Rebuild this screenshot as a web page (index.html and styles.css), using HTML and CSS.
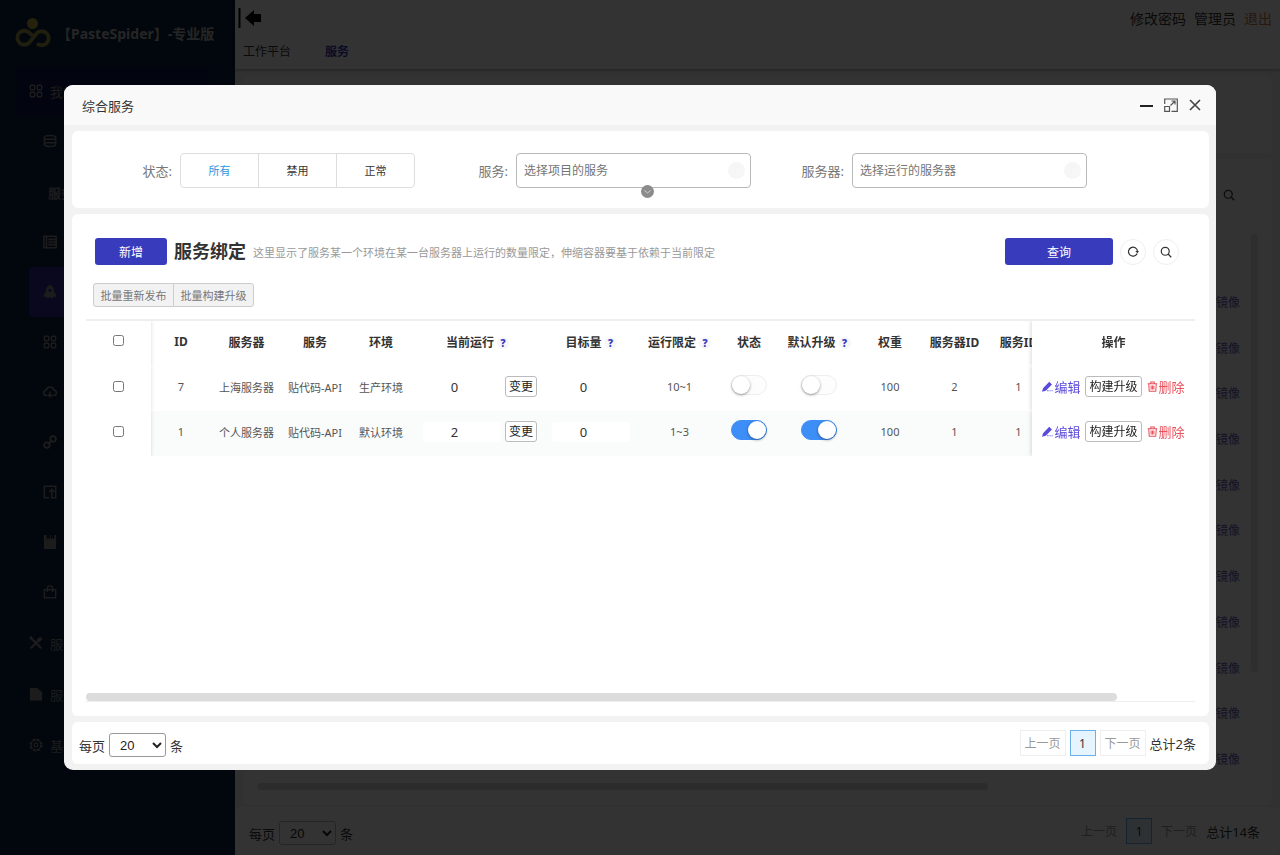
FILE: index.html
```html
<!DOCTYPE html>
<html lang="zh-CN">
<head>
    <meta charset="UTF-8">
    <meta name="viewport" content="width=device-width, initial-scale=1.0">
    <title>PasteSpider - 综合服务</title>
    <link rel="stylesheet" href="styles.css">
</head>
<body>
    <svg class="sprite" aria-hidden="true">
        <symbol id="i-grid" viewBox="0 0 16 16"><g fill="none" stroke="currentColor" stroke-width="1.6"><rect x="1.5" y="1.5" width="5" height="5" rx="1"/><rect x="9.5" y="1.5" width="5" height="5" rx="1"/><rect x="1.5" y="9.5" width="5" height="5" rx="1"/><rect x="9.5" y="9.5" width="5" height="5" rx="1"/></g></symbol>
        <symbol id="i-database" viewBox="0 0 16 16"><path d="M1.500 4c0-3 13-3 13 0v8c0 3-13 3-13 0zM2 6h12M2 10h12" fill="none" stroke="currentColor" stroke-width="1.800"/></symbol>
        <symbol id="i-list" viewBox="0 0 16 16"><path d="M1 1.500h14v13H1zM4 1.500v13M6 5h8M6 8h8M6 11h8" fill="none" stroke="currentColor" stroke-width="1.800"/></symbol>
        <symbol id="i-rocket" viewBox="0 0 16 16"><path d="M8 0c3 1 5 4 4.500 7.500L15 11v3l-3-1-1 2.500L8 14l-3 1.500L4 13l-3 1v-3l2.500-3.500C3 4 5 1 8 0z" fill="currentColor"/><circle cx="8" cy="6" r="1.800" fill="#302a9a"/></symbol>
        <symbol id="i-cloud" viewBox="0 0 16 16"><path d="M5 12H4a3 3 0 0 1-.5-6 4.600 4.600 0 0 1 9 0A3 3 0 0 1 12 12h-1M8 7.500V13M5.800 11L8 13.200 10.200 11" fill="none" stroke="currentColor" stroke-width="1.800"/></symbol>
        <symbol id="i-link" viewBox="0 0 16 16"><g fill="none" stroke="currentColor" stroke-width="2"><circle cx="4.500" cy="11.500" r="3.200"/><circle cx="11.500" cy="4.500" r="3.200"/><path d="M6 10l4-4"/></g></symbol>
        <symbol id="i-export" viewBox="0 0 16 16"><path d="M7 14.500H1.500v-13h13v13H10V5M7 8l3-3 3 3" fill="none" stroke="currentColor" stroke-width="1.800"/></symbol>
        <symbol id="i-book" viewBox="0 0 16 16"><path d="M1 0h3v5l2-1.500L8 5V0h1v5l2-1.500L13 5V0h2v16H1z" fill="currentColor"/></symbol>
        <symbol id="i-bag" viewBox="0 0 16 16"><path d="M1.500 5.500h13v9h-13zM5 8V4a3 3 0 0 1 6 0v4" fill="none" stroke="currentColor" stroke-width="1.6"/></symbol>
        <symbol id="i-tools" viewBox="0 0 16 16"><path d="M2 2l12 12M14 2L2 14" stroke="currentColor" stroke-width="2.600"/><path d="M9 4l4-3.500L12.500 3l3 .5L12 7zM0 1l3-1 2 4-2 1z" fill="currentColor"/></symbol>
        <symbol id="i-file" viewBox="0 0 16 16"><path d="M1 1h8.500L15 6v9.500H1z" fill="currentColor"/></symbol>
        <symbol id="i-gear" viewBox="0 0 16 16"><g fill="none" stroke="currentColor"><circle cx="8" cy="8" r="6.500" stroke-width="1.800" stroke-dasharray="3.400 1.700"/><circle cx="8" cy="8" r="5.500"/><circle cx="8" cy="8" r="2.200" stroke-width="1.300"/></g></symbol>
        <symbol id="i-search" viewBox="0 0 16 16"><circle cx="7" cy="7" r="5.300" fill="none" stroke="currentColor" stroke-width="1.600"/><path d="M10.800 10.800L15 15" stroke="currentColor" stroke-width="1.800"/></symbol>
        <symbol id="i-edit" viewBox="0 0 16 16"><path d="M0 15.500l1.500-5L10.500 1l4 4L5.500 14zM7.500 13.500h2v1.500h-2zM11 13.500h1.500v1.500H11zM14 13.500h1.500v1.500H14z" fill="currentColor"/></symbol>
        <symbol id="i-trash" viewBox="0 0 16 16"><path d="M1 4h14M5.500 4V1.500h5V4M2.500 4l.8 10.800h9.400L13.500 4M6 6.500v6M8 6.500v6M10 6.500v6" fill="none" stroke="currentColor" stroke-width="1.500"/></symbol>
    </svg>

    <div class="app">
        <aside class="sidebar">
            <div class="brand">
                <svg class="logo" viewBox="0 0 36 32">
                    <circle cx="17.500" cy="6.500" r="5.500" fill="#b8a83c"/>
                    <path d="M17.500 18.500L14 15.500A7 7 0 1 0 14 26L22 16A7 7 0 1 1 22 26.500" fill="none" stroke="#a09440" stroke-width="3.800"/>
                </svg>
                <span>【PasteSpider】-专业版</span>
            </div>
            <nav class="nav">
                <a href="#" class="nav-item current"><svg><use href="#i-grid"/></svg>我的</a>
                <a href="#" class="nav-item sub"><svg><use href="#i-database"/></svg></a>
                <span class="nav-item nav-title">服务</span>
                <a href="#" class="nav-item sub"><svg><use href="#i-list"/></svg></a>
                <a href="#" class="nav-item sub active"><svg><use href="#i-rocket"/></svg></a>
                <a href="#" class="nav-item sub"><svg><use href="#i-grid"/></svg></a>
                <a href="#" class="nav-item sub"><svg><use href="#i-cloud"/></svg></a>
                <a href="#" class="nav-item sub"><svg><use href="#i-link"/></svg></a>
                <a href="#" class="nav-item sub"><svg><use href="#i-export"/></svg></a>
                <a href="#" class="nav-item sub"><svg><use href="#i-book"/></svg></a>
                <a href="#" class="nav-item sub"><svg><use href="#i-bag"/></svg></a>
                <a href="#" class="nav-item group"><svg><use href="#i-tools"/></svg>服务</a>
                <a href="#" class="nav-item group"><svg><use href="#i-file"/></svg>服务</a>
                <a href="#" class="nav-item group"><svg><use href="#i-gear"/></svg>基础</a>
            </nav>
        </aside>
        <main class="main">
            <header class="topbar">
                <div class="topbar-row">
                    <button class="fold" aria-label="收起菜单">
                        <svg viewBox="0 0 24 20"><path d="M1.500 0v20" stroke="#000" stroke-width="2"/><path d="M7 10l9-8v4h7v8h-7v4z"/></svg>
                    </button>
                    <div class="user-links">
                        <a href="#">修改密码</a>
                        <a href="#">管理员</a>
                        <a href="#" class="logout">退出</a>
                    </div>
                </div>
                <div class="tabs">
                    <a href="#">工作平台</a>
                    <a href="#" class="on">服务</a>
                </div>
            </header>
            <section class="panel page-filter"></section>
            <section class="panel page-body">
                <svg class="page-search"><use href="#i-search"/></svg>
                <div class="page-links">
                    <a href="#">镜像</a>
                    <a href="#">镜像</a>
                    <a href="#">镜像</a>
                    <a href="#">镜像</a>
                    <a href="#">镜像</a>
                    <a href="#">镜像</a>
                    <a href="#">镜像</a>
                    <a href="#">镜像</a>
                    <a href="#">镜像</a>
                    <a href="#">镜像</a>
                    <a href="#">镜像</a>
                </div>
                <div class="page-scroll-y"></div>
                <div class="page-scroll"></div>
            </section>
            <footer class="panel pager page-pager">
                <label class="page-size">每页 <select><option>20</option></select> 条</label>
                <div class="pages">
                    <button disabled>上一页</button>
                    <button class="on">1</button>
                    <button disabled>下一页</button>
                    <span>总计14条</span>
                </div>
            </footer>
        </main>
    </div>

    <div class="mask"></div>

    <div class="dialog" role="dialog" aria-labelledby="dialog-title">
        <header class="dialog-head">
            <span id="dialog-title">综合服务</span>
            <div class="dialog-tools">
                <button aria-label="最小化"><svg viewBox="0 0 14 14"><path d="M0 8h13" stroke="#222" stroke-width="2"/></svg></button>
                <button aria-label="最大化"><svg viewBox="0 0 14 14"><path d="M.7 6V1h12.600v12.300H7.500M.7 8.500h4.800v4.800H.7zM6.500 7.500L11 3M7.500 3H11v3.500" fill="none" stroke="#555" stroke-width="1.200"/></svg></button>
                <button aria-label="关闭"><svg viewBox="0 0 14 14"><path d="M2 2l10 10M12 2L2 12" stroke="#444" stroke-width="1.600"/></svg></button>
            </div>
        </header>

        <div class="dialog-body">
            <form class="card filter">
                <div class="field">
                    <span class="label" id="state-label">状态:</span>
                    <div class="segment" role="radiogroup" aria-labelledby="state-label">
                        <label><input type="radio" name="state" checked><span>所有</span></label>
                        <label><input type="radio" name="state"><span>禁用</span></label>
                        <label><input type="radio" name="state"><span>正常</span></label>
                    </div>
                </div>
                <div class="field">
                    <label class="label" for="service">服务:</label>
                    <div class="picker">
                        <input type="text" id="service" placeholder="选择项目的服务">
                        <i></i>
                    </div>
                </div>
                <div class="field">
                    <label class="label" for="server">服务器:</label>
                    <div class="picker">
                        <input type="text" id="server" placeholder="选择运行的服务器">
                        <i></i>
                    </div>
                </div>
                <button type="button" class="more" aria-label="展开">
                    <svg viewBox="0 0 13 13"><path d="M3.500 5.500l3 2.500 3-2.500" fill="none" stroke="#d0d0d0"/></svg>
                </button>
            </form>

            <section class="card content">
                <div class="toolbar">
                    <button class="primary">新增</button>
                    <h2>服务绑定</h2>
                    <p>这里显示了服务某一个环境在某一台服务器上运行的数量限定，伸缩容器要基于依赖于当前限定</p>
                    <button class="primary query">查询</button>
                    <button class="round" aria-label="刷新"><svg viewBox="0 0 16 16"><path d="M13.500 10A6 6 0 1 1 14 7" fill="none" stroke="currentColor" stroke-width="1.600"/><path d="M11 6.500h5L14 9.500z" fill="currentColor"/></svg></button>
                    <button class="round" aria-label="搜索"><svg><use href="#i-search"/></svg></button>
                </div>
                <div class="batch">
                    <button>批量重新发布</button>
                    <button>批量构建升级</button>
                </div>

                <div class="table-wrap">
                    <table>
                        <colgroup>
                            <col class="w-check"><col class="w-id"><col class="w-server"><col class="w-name"><col class="w-name">
                            <col class="w-running"><col class="w-target"><col class="w-limit"><col class="w-state"><col class="w-default">
                            <col class="w-weight"><col class="w-server-id"><col class="w-service-id"><col class="w-action">
                        </colgroup>
                        <thead>
                            <tr>
                                <th class="stick-left"><input type="checkbox" aria-label="全选"></th>
                                <th>ID</th>
                                <th>服务器</th>
                                <th>服务</th>
                                <th>环境</th>
                                <th>当前运行<b class="tip">?</b></th>
                                <th>目标量<b class="tip">?</b></th>
                                <th>运行限定<b class="tip">?</b></th>
                                <th>状态</th>
                                <th>默认升级<b class="tip">?</b></th>
                                <th>权重</th>
                                <th>服务器ID</th>
                                <th>服务ID</th>
                                <th class="stick-right">操作</th>
                            </tr>
                        </thead>
                        <tbody>
                            <tr>
                                <td class="stick-left"><input type="checkbox" aria-label="选择 7"></td>
                                <td>7</td>
                                <td>上海服务器</td>
                                <td>贴代码-API</td>
                                <td>生产环境</td>
                                <td><div class="change"><input type="number" value="0" aria-label="当前运行"><button class="small">变更</button></div></td>
                                <td><input type="number" value="0" aria-label="目标量"></td>
                                <td>10~1</td>
                                <td><input type="checkbox" class="switch" aria-label="状态"></td>
                                <td><input type="checkbox" class="switch" aria-label="默认升级"></td>
                                <td>100</td>
                                <td>2</td>
                                <td>1</td>
                                <td class="stick-right">
                                    <div class="actions">
                                        <a href="#" class="edit"><svg><use href="#i-edit"/></svg>编辑</a>
                                        <button class="small">构建升级</button>
                                        <a href="#" class="delete"><svg><use href="#i-trash"/></svg>删除</a>
                                    </div>
                                </td>
                            </tr>
                            <tr>
                                <td class="stick-left"><input type="checkbox" aria-label="选择 1"></td>
                                <td>1</td>
                                <td>个人服务器</td>
                                <td>贴代码-API</td>
                                <td>默认环境</td>
                                <td><div class="change"><input type="number" value="2" aria-label="当前运行"><button class="small">变更</button></div></td>
                                <td><input type="number" value="0" aria-label="目标量"></td>
                                <td>1~3</td>
                                <td><input type="checkbox" class="switch" aria-label="状态" checked></td>
                                <td><input type="checkbox" class="switch" aria-label="默认升级" checked></td>
                                <td>100</td>
                                <td>1</td>
                                <td>1</td>
                                <td class="stick-right">
                                    <div class="actions">
                                        <a href="#" class="edit"><svg><use href="#i-edit"/></svg>编辑</a>
                                        <button class="small">构建升级</button>
                                        <a href="#" class="delete"><svg><use href="#i-trash"/></svg>删除</a>
                                    </div>
                                </td>
                            </tr>
                        </tbody>
                    </table>
                    <div class="scrollbar"><div></div></div>
                </div>
            </section>

            <footer class="card pager">
                <label class="page-size">每页 <select><option>20</option></select> 条</label>
                <div class="pages">
                    <button disabled>上一页</button>
                    <button class="on">1</button>
                    <button disabled>下一页</button>
                    <span>总计2条</span>
                </div>
            </footer>
        </div>
    </div>
</body>
</html>
```

FILE: styles.css
```css
* {
    box-sizing: border-box;
}
body {
    margin: 0;
    font-family: "Noto Sans", "Noto Sans CJK SC", sans-serif;
    font-size: 13px;
    color: #333;
}
a {
    text-decoration: none;
    color: inherit;
}
button, input, select {
    font-family: inherit;
    margin: 0;
}
button {
    padding: 0;
    cursor: pointer;
}
.sprite {
    display: none;
}

/* page under the dialog */
.app {
    display: flex;
    height: 100vh;
    overflow: hidden;
}
.sidebar {
    width: 235px;
    flex: none;
    background-color: #0c2240;
    color: #8c8c8c;
}
.brand {
    display: flex;
    align-items: center;
    gap: 6px;
    height: 66px;
    padding-left: 15px;
    font-size: 14px;
    font-weight: bold;
    white-space: nowrap;
    color: #bbb;
}
.logo {
    width: 36px;
    height: 32px;
    flex: none;
}
.nav-item {
    display: flex;
    align-items: center;
    gap: 7px;
    height: 50px;
    padding-left: 29px;
}
.nav-item svg {
    width: 14px;
    height: 14px;
}
.nav-item.current {
    margin: 0 26px 0 17px;
    padding-left: 12px;
    background-color: #0c1c50;
}
.nav-item.sub {
    padding-left: 43px;
}
.nav-item.active {
    margin-left: 29px;
    padding-left: 14px;
    background-color: #302a9a;
    border-radius: 4px;
}
.nav-title {
    margin-top: 1px;
    padding-left: 48px;
    font-weight: bold;
}
.nav-item.group {
    margin-top: 1px;
}
.main {
    flex: 1;
    min-width: 0;
    display: flex;
    flex-direction: column;
    background-color: #f2f2f2;
}
.topbar {
    height: 69px;
    margin-bottom: 7px;
    background-color: #fff;
    box-shadow: 0 1px 3px rgba(0, 0, 0, 0.3);
}
.topbar-row {
    display: flex;
    justify-content: space-between;
    align-items: center;
    height: 36px;
    padding: 0 8px 0 3px;
}
.fold {
    border: none;
    background: none;
    height: 20px;
}
.fold svg {
    width: 24px;
    height: 20px;
}
.user-links {
    display: flex;
    gap: 8px;
    font-size: 14px;
}
.user-links .logout {
    color: #c87848;
}
.tabs {
    display: flex;
    gap: 34px;
    padding-left: 8px;
    font-size: 12px;
    line-height: 32px;
}
.tabs .on {
    color: #393bbd;
    font-weight: bold;
}
.panel {
    margin: 0 8px;
    background-color: #fff;
    border-radius: 6px;
}
.page-filter {
    height: 77px;
    margin-bottom: 6px;
}
.page-body {
    position: relative;
    flex: 1;
    display: flex;
    flex-direction: column;
    align-items: flex-end;
    padding: 30px 14px 15px;
}
.page-search {
    width: 12px;
    height: 12px;
    margin-right: 23px;
    flex: none;
}
.page-links {
    flex: 1;
    display: flex;
    flex-direction: column;
    justify-content: space-between;
    padding: 93px 18px 0 0;
    margin-bottom: 14px;
    font-size: 12px;
    line-height: 18px;
    color: #6462b8;
}
.page-scroll-y {
    position: absolute;
    top: 75px;
    right: 14px;
    bottom: 133px;
    width: 7px;
    background-color: #e4e4e4;
    border-radius: 4px;
}
.page-scroll {
    align-self: flex-start;
    width: 73%;
    height: 7px;
    background-color: #ddd;
    border-radius: 4px;
}
.mask {
    position: fixed;
    inset: 0;
    background-color: rgba(0, 0, 0, 0.8);
}

/* dialog */
.dialog {
    position: fixed;
    inset: 85px 64px;
    display: flex;
    flex-direction: column;
    background-color: #f2f2f2;
    border-radius: 9px;
    overflow: hidden;
}
.dialog-head {
    display: flex;
    justify-content: space-between;
    align-items: center;
    height: 40px;
    padding: 0 14px 0 18px;
    background-color: #f9f9f9;
}
.dialog-tools {
    display: flex;
    gap: 10px;
}
.dialog-tools button {
    width: 14px;
    height: 14px;
    border: none;
    background: none;
}
.dialog-tools svg {
    display: block;
    width: 14px;
    height: 14px;
}
.dialog-body {
    flex: 1;
    min-height: 0;
    display: flex;
    flex-direction: column;
    gap: 6px;
    padding: 6px 7px 6px 8px;
}
.card {
    background-color: #fff;
    border-radius: 6px;
}

/* filter */
.filter {
    position: relative;
    display: flex;
    padding: 22px 7px 20px;
}
.field {
    display: flex;
    align-items: center;
    gap: 8px;
}
.label {
    width: 93px;
    text-align: right;
    color: #777;
}
.segment {
    display: flex;
    width: 235px;
    height: 35px;
    border: 1px solid #ddd;
    border-radius: 4px;
}
.segment label {
    flex: 1;
    border-left: 1px solid #ddd;
    text-align: center;
    font-size: 11px;
    line-height: 33px;
    cursor: pointer;
}
.segment label:first-child {
    border-left: none;
}
.segment input {
    appearance: none;
    position: absolute;
}
.segment input:checked + span {
    color: #2a96e0;
}
.picker {
    position: relative;
    width: 235px;
}
.picker input {
    display: block;
    width: 100%;
    height: 35px;
    padding: 0 30px 0 7px;
    border: 1px solid #b8b8b8;
    border-radius: 4px;
    font-size: 12px;
}
.picker input::placeholder {
    color: #757575;
}
.picker i {
    position: absolute;
    top: 9px;
    right: 6px;
    width: 17px;
    height: 17px;
    border-radius: 50%;
    background-color: #f6f6f6;
}
.more {
    position: absolute;
    top: 54px;
    left: 50%;
    width: 13px;
    height: 13px;
    border: none;
    border-radius: 50%;
    background-color: #8c8c8c;
}
.more svg {
    display: block;
}

/* toolbar */
.content {
    flex: 1;
    min-height: 0;
    display: flex;
    flex-direction: column;
    padding: 24px 14px 14px;
}
.toolbar {
    display: flex;
    align-items: center;
    gap: 7px;
    padding: 0 16px 0 9px;
}
.toolbar h2 {
    margin: 0;
    font-size: 18px;
    line-height: 27px;
}
.toolbar p {
    flex: 1;
    margin: 0;
    font-size: 11px;
    color: #999;
}
.primary {
    width: 72px;
    height: 27px;
    border: none;
    border-radius: 3px;
    background-color: #393bbd;
    color: #fff;
    font-size: 12px;
}
.query {
    width: 108px;
}
.round {
    display: flex;
    align-items: center;
    justify-content: center;
    width: 26px;
    height: 26px;
    border: 1px solid #eee;
    border-radius: 50%;
    background-color: #fff;
    color: #333;
}
.round svg {
    width: 12px;
    height: 12px;
}
.batch {
    display: flex;
    padding: 18px 7px 12px;
}
.batch button {
    width: 81px;
    height: 24px;
    border: 1px solid #ccc;
    background-color: #f2f2f2;
    color: #777;
    font-size: 11px;
}
.batch button:first-child {
    border-radius: 3px 0 0 3px;
}
.batch button:last-child {
    margin-left: -1px;
    border-radius: 0 3px 3px 0;
}

/* table */
.table-wrap {
    flex: 1;
    display: flex;
    flex-direction: column;
    justify-content: space-between;
    overflow: hidden;
    border-top: 2px solid #eee;
    border-bottom: 1px solid #eee;
}
table {
    width: 1127px;
    table-layout: fixed;
    border-collapse: separate;
    border-spacing: 0;
}
.w-check { width: 65px; }
.w-id { width: 60px; }
.w-server { width: 71px; }
.w-name { width: 66px; }
.w-running { width: 127px; }
.w-target { width: 100px; }
.w-limit { width: 77px; }
.w-state { width: 62px; }
.w-default { width: 78px; }
.w-weight { width: 64px; }
.w-server-id { width: 65px; }
.w-service-id { width: 63px; }
.w-action { width: 163px; }
th, td {
    height: 45px;
    padding: 0 0 4px;
    text-align: center;
    white-space: nowrap;
}
th {
    font-size: 12px;
}
td {
    font-size: 11px;
    color: #555;
}
tbody tr:nth-child(even) td {
    background-color: #fafcfc;
}
td.stick-left, th.stick-left, td.stick-right, th.stick-right,
tbody tr:nth-child(even) td.stick-left, tbody tr:nth-child(even) td.stick-right {
    position: sticky;
    background-color: #fff;
}
.stick-left {
    left: 0;
    padding-bottom: 8px;
    box-shadow: 1px 0 3px rgba(0, 0, 0, 0.1);
    clip-path: inset(0 -6px 0 0);
}
.stick-right {
    right: 0;
    box-shadow: -1px 0 4px rgba(0, 0, 0, 0.15);
    clip-path: inset(0 0 0 -6px);
}
.stick-left input {
    width: 11px;
    height: 11px;
    vertical-align: middle;
}
.tip {
    display: inline-block;
    width: 12px;
    height: 12px;
    margin-left: 3px;
    border-radius: 50%;
    background-color: #f6f6f8;
    color: #393bbd;
    font-size: 10px;
    line-height: 12px;
}
input[type="number"] {
    width: 78px;
    height: 20px;
    padding: 0;
    border: none;
    border-radius: 3px;
    background-color: #fff;
    color: #333;
    font-size: 13px;
    text-align: center;
}
.change {
    display: flex;
    align-items: center;
    justify-content: flex-end;
    gap: 4px;
    padding-right: 4px;
}
.small {
    height: 21px;
    padding: 0 3px;
    border: 1px solid #bbb;
    border-radius: 3px;
    background-color: #fff;
    color: #222;
    font-size: 12px;
    line-height: 18px;
}
.switch {
    appearance: none;
    display: block;
    width: 36px;
    height: 20px;
    margin: 0 auto 4px;
    border: 1px solid #eee;
    border-radius: 10px;
    background-color: #fdfdfd;
    cursor: pointer;
}
.switch::before {
    content: "";
    display: block;
    width: 18px;
    height: 18px;
    border-radius: 50%;
    background-color: #fff;
    box-shadow: 0 1px 3px rgba(0, 0, 0, 0.4);
}
.switch:checked {
    border-color: #3e8ef7;
    background-color: #3e8ef7;
}
.switch:checked::before {
    margin-left: auto;
}
.actions {
    display: flex;
    align-items: center;
    justify-content: center;
    gap: 5px;
    font-size: 13px;
}
.actions a {
    display: flex;
    align-items: center;
    gap: 1px;
}
.actions svg {
    width: 11px;
    height: 11px;
}
.edit {
    color: #5b4bdb;
}
.delete {
    color: #e8505b;
}
.scrollbar div {
    width: 93%;
    height: 8px;
    border-radius: 4px;
    background-color: #dcdcdc;
}

/* pager */
.pager {
    display: flex;
    justify-content: space-between;
    align-items: center;
    height: 42px;
    padding: 0 13px 0 7px;
}
.page-size {
    display: flex;
    align-items: center;
    gap: 4px;
    padding-top: 4px;
}
.page-size select {
    width: 57px;
    height: 24px;
    padding: 0 0 0 6px;
    border: 1px solid #999;
    border-radius: 3px;
    background-color: #fff;
    color: #222;
    font-family: "Liberation Sans", Arial, sans-serif;
    font-size: 13px;
}
.pages {
    display: flex;
    align-items: center;
    gap: 4px;
}
.pages button {
    min-width: 26px;
    height: 26px;
    padding: 0 4px;
    border: 1px solid #eee;
    background-color: #fff;
    color: #999;
    font-size: 12px;
}
.pages button.on {
    border-color: #69b1ee;
    background-color: #e6f4ff;
    color: #333;
}
.page-pager {
    height: 48px;
    margin: 2px 0 0;
    padding: 0 20px 0 14px;
}
.page-pager .pages button {
    border-color: #fff;
}
.page-pager .pages button.on {
    border-color: #69b1ee;
}
.page-pager select {
    border-color: #bbb;
}
```
